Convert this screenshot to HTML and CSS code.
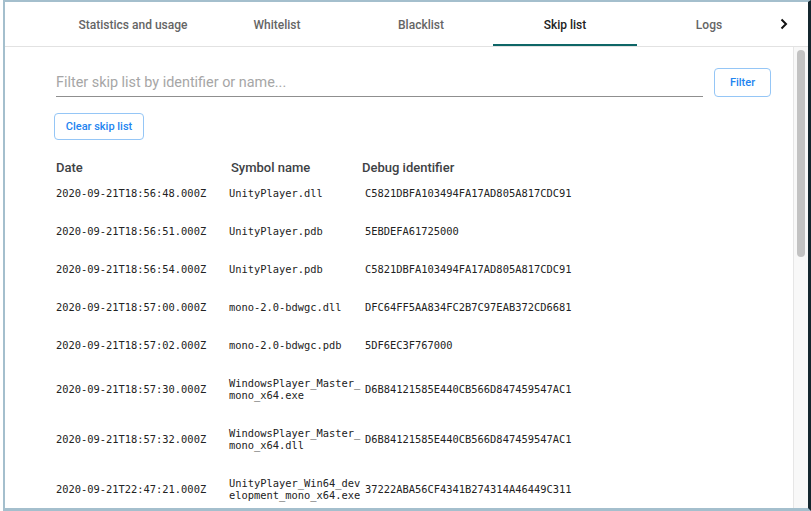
FILE: index.html
```html
<!DOCTYPE html>
<html>
<head>
<meta charset="utf-8">
<link rel="stylesheet" href="styles.css">
</head>
<body>
<div class="window">
  <nav class="tabbar">
    <div class="tab-spacer"></div>
    <div class="tab">Statistics and usage</div>
    <div class="tab">Whitelist</div>
    <div class="tab">Blacklist</div>
    <div class="tab active">Skip list</div>
    <div class="tab">Logs</div>
    <button class="tab-next" aria-label="Next">
      <svg width="10" height="12" viewBox="0 0 10 12"><path d="M2.5 1.5 L7 6 L2.5 10.5" fill="none" stroke="#111" stroke-width="2"/></svg>
    </button>
  </nav>
  <div class="body">
    <main class="content">
      <div class="filter-row">
        <input class="filter-input" type="text" placeholder="Filter skip list by identifier or name...">
        <button class="btn btn-filter">Filter</button>
      </div>
      <button class="btn btn-clear">Clear skip list</button>
      <div class="table">
        <div class="row head">
          <div class="c-date">Date</div>
          <div class="c-sym">Symbol name</div>
          <div class="c-id">Debug identifier</div>
        </div>
        <div class="row">
          <div class="c-date">2020-09-21T18:56:48.000Z</div>
          <div class="c-sym">UnityPlayer.dll</div>
          <div class="c-id">C5821DBFA103494FA17AD805A817CDC91</div>
        </div>
        <div class="row">
          <div class="c-date">2020-09-21T18:56:51.000Z</div>
          <div class="c-sym">UnityPlayer.pdb</div>
          <div class="c-id">5EBDEFA61725000</div>
        </div>
        <div class="row">
          <div class="c-date">2020-09-21T18:56:54.000Z</div>
          <div class="c-sym">UnityPlayer.pdb</div>
          <div class="c-id">C5821DBFA103494FA17AD805A817CDC91</div>
        </div>
        <div class="row">
          <div class="c-date">2020-09-21T18:57:00.000Z</div>
          <div class="c-sym">mono-2.0-bdwgc.dll</div>
          <div class="c-id">DFC64FF5AA834FC2B7C97EAB372CD6681</div>
        </div>
        <div class="row">
          <div class="c-date">2020-09-21T18:57:02.000Z</div>
          <div class="c-sym">mono-2.0-bdwgc.pdb</div>
          <div class="c-id">5DF6EC3F767000</div>
        </div>
        <div class="row">
          <div class="c-date">2020-09-21T18:57:30.000Z</div>
          <div class="c-sym">WindowsPlayer_Master_mono_x64.exe</div>
          <div class="c-id">D6B84121585E440CB566D847459547AC1</div>
        </div>
        <div class="row">
          <div class="c-date">2020-09-21T18:57:32.000Z</div>
          <div class="c-sym">WindowsPlayer_Master_mono_x64.dll</div>
          <div class="c-id">D6B84121585E440CB566D847459547AC1</div>
        </div>
        <div class="row">
          <div class="c-date">2020-09-21T22:47:21.000Z</div>
          <div class="c-sym">UnityPlayer_Win64_development_mono_x64.exe</div>
          <div class="c-id">37222ABA56CF4341B274314A46449C311</div>
        </div>
      </div>
    </main>
    <div class="scrollbar"><div class="thumb"></div></div>
  </div>
</div>
</body>
</html>
```
FILE: styles.css
```css
* { box-sizing: border-box; }
html, body { margin: 0; padding: 0; background: #fff; }
body {
  width: 811px;
  height: 511px;
  overflow: hidden;
  font-family: Roboto, "Liberation Sans", sans-serif;
}
.window {
  margin-left: 3px;
  width: 808px;
  height: 511px;
  border-top: 2px solid #a4bfcd;
  border-left: 2px solid #a4bfcd;
  border-bottom: 3px solid #a4bfcd;
  border-right: 3px solid #14262e;
  display: flex;
  flex-direction: column;
  overflow: hidden;
}
.tabbar {
  height: 45px;
  flex: none;
  display: flex;
  align-items: stretch;
  border-bottom: 1px solid #e2e2e2;
}
.tab-spacer { width: 56px; flex: none; }
.tab {
  width: 144px;
  flex: none;
  display: flex;
  align-items: center;
  justify-content: center;
  font-size: 12px;
  font-weight: 500;
  color: #656565;
  border-bottom: 2px solid transparent;
  padding-top: 4px;
}
.tab.active {
  color: #222;
  border-bottom-color: #0e6667;
}
.tab-next {
  width: 6px;
  flex: none;
  border: 0;
  background: none;
  padding: 0;
  display: flex;
  align-items: center;
  justify-content: center;
  overflow: visible;
}
.tab-next svg { flex: none; }
.body {
  flex: 1;
  display: flex;
  min-height: 0;
}
.content {
  flex: 1;
  padding: 21px 22px 0 49px;
  overflow: hidden;
}
.filter-row {
  display: flex;
  align-items: center;
  gap: 11px;
  margin-left: 2px;
}
.filter-input {
  flex: 1;
  height: 29px;
  border: 0;
  border-bottom: 1px solid #8f8f8f;
  outline: none;
  padding: 0;
  font-family: Roboto, "Liberation Sans", sans-serif;
  font-size: 14.4px;
  color: #333;
  background: transparent;
}
.filter-input::placeholder { color: #a6a6a6; }
.btn {
  border: 1px solid #95c6f6;
  border-radius: 4px;
  background: #fff;
  color: #2384f0;
  font-family: Roboto, "Liberation Sans", sans-serif;
  font-weight: 500;
  font-size: 11px;
  padding: 0;
}
.btn-filter { width: 57px; height: 29px; }
.btn-clear { width: 90px; height: 27px; margin-top: 16px; display: block; }
.table { margin-top: 22px; margin-left: 2px; }
.row {
  display: grid;
  grid-template-columns: 173px 133px 1fr;
  align-items: center;
  padding: 13px 0;
  font-family: "DejaVu Sans Mono", monospace;
  font-size: 10.4px;
  line-height: 12px;
  color: #222;
}
.row.head {
  padding: 0;
  font-family: Roboto, "Liberation Sans", sans-serif;
  font-size: 13px;
  font-weight: 500;
  color: #3e4245;
}
.row.head .c-sym { padding-left: 2px; }
.row.head .c-id { padding-left: 0; }
.c-sym { word-break: break-all; }
.c-id { padding-left: 3px; }
.scrollbar {
  width: 15px;
  flex: none;
  background: #f8f8f8;
  border-left: 1px solid #e6e6e6;
  padding: 3px 0 0 3px;
}
.thumb {
  width: 8px;
  height: 207px;
  border-radius: 4px;
  background: #c2c2c2;
}
```
